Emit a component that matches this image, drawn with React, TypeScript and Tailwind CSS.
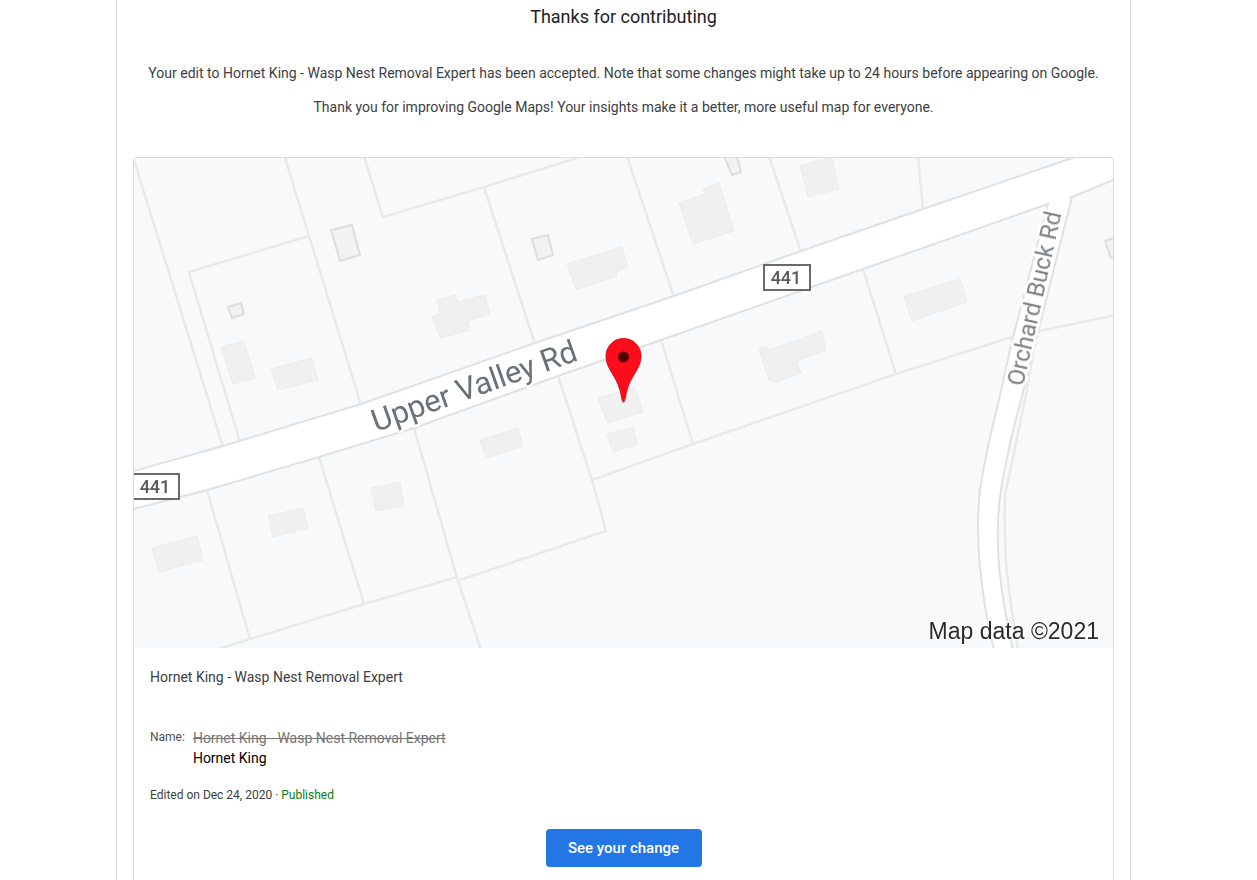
const PLACE_NAME = "Hornet King - Wasp Nest Removal Expert"

// Property boundaries
const LOT_LINES = [
  "M134 160 L223 447",
  "M285 158 L309 236 L361 405",
  "M309 236 L189 272 L240 442",
  "M364 156 L383 217 L484 187 L577 158",
  "M484 187 L535 344",
  "M627 156 L674 297",
  "M769 156 L801 252",
  "M918 156 L923 210",
  "M207 490 L250 639",
  "M319 457 L364 604",
  "M414 428 L457 578 L481 650",
  "M216 650 L250 639 L364 604 L457 577",
  "M558 376 L592 480 L606 531 L460 580",
  "M592 480 L693 444 L896 374 L1012 337 L1116 315",
  "M661 340 L693 444",
  "M863 269 L896 374",
]

const BUILDINGS = [
  "221,347 244,341 255,378 233,384",
  "271,369 312,358 318,380 278,390",
  "437,300 455,295 458,302 485,295 490,314 468,321 470,330 440,338 432,317 440,314",
  "567,264 622,247 628,267 616,272 617,276 576,290",
  "679,203 705,194 703,189 719,183 734,231 693,244",
  "800,166 832,157 839,189 808,197",
  "904,296 960,279 967,302 912,321",
  "759,349 766,346 769,350 822,331 826,350 797,361 801,373 776,382 769,380",
  "480,440 518,428 523,446 486,458",
  "598,398 635,387 643,412 607,423",
  "607,434 633,427 638,444 613,452",
  "152,548 197,536 203,560 159,572",
  "268,516 303,508 308,528 273,537",
  "371,488 400,482 404,506 376,511",
]

const SHEDS = [
  "331,230 352,225 360,255 340,261",
  "228,307 241,303 244,314 232,318",
  "532,239 548,235 553,255 538,260",
  "724,156 736,153 741,172 732,175",
  "1105,241 1120,236 1126,254 1111,258",
]

function RouteShield({ x, y }: { x: number; y: number }) {
  return (
    <g>
      <rect x={x} y={y} width="46" height="25" fill="#fff" stroke="#6a6a6a" strokeWidth="2" />
      <text x={x + 22} y={y + 19} textAnchor="middle" fontSize="18" fontWeight="500" fill="#56585a">
        441
      </text>
    </g>
  )
}

function StaticMap() {
  return (
    <svg
      viewBox="134 158 979 490"
      className="block w-full rounded-t-[3px] font-['Roboto',sans-serif]"
      role="img"
      aria-label="Map of Upper Valley Rd"
    >
      <defs>
        <filter id="soften">
          <feGaussianBlur stdDeviation="0.7" />
        </filter>
      </defs>
      <rect x="134" y="158" width="979" height="490" fill="#f8f9fb" />

      <g filter="url(#soften)">
        <g fill="none" stroke="#e8e9e9" strokeWidth="2.5">
          {LOT_LINES.map((d) => (
            <path key={d} d={d} />
          ))}
        </g>
        <g fill="#f0f0f0" stroke="#ebebeb" strokeWidth="1">
          {BUILDINGS.map((points) => (
            <polygon key={points} points={points} />
          ))}
        </g>
        <g fill="#f1f3f3" stroke="#dcdede" strokeWidth="2">
          {SHEDS.map((points) => (
            <polygon key={points} points={points} />
          ))}
        </g>

        {/* Roads */}
        <path
          d="M1036 337 L1025 400 L1005 495 Q1004 528 1006 562 Q1009 595 1018 650"
          fill="none"
          stroke="#e8eaea"
          strokeWidth="2.5"
        />
        <path
          d="M1048 204 L1012 341 L999 400 Q985 455 980 490 Q976 525 980 567 Q984 610 994 650 L1013 650 Q1003 605 999 567 Q996 525 1000 497 Q1006 455 1021 400 L1072 197 Z"
          fill="#fff"
          stroke="#dfe1e3"
          strokeWidth="2"
        />
        <path
          d="M130 472 L223 446 L361 404 L535 343 L674 296 L801 251 L923 209 L1078 156 L1116 156 L1116 179 L1072 197 L1048 204 L863 269 L661 340 L558 376 L414 428 L319 457 L207 490 L130 510 Z"
          fill="#fff"
          stroke="#dfe1e3"
          strokeWidth="2"
        />
        <path d="M1050 200 L1070 194 L1067 208 L1048 211 Z" fill="#fff" />
      </g>

      {/* Labels */}
      <g filter="url(#soften)">
        <text
          transform="translate(376 432) rotate(-19.5)"
          fontSize="31"
          fill="#697277"
          stroke="#fff"
          strokeWidth="5"
          strokeLinejoin="round"
          paintOrder="stroke"
        >
          Upper Valley Rd
        </text>
        <text
          transform="translate(1023 387) rotate(-77.5)"
          fontSize="24"
          fill="#7d8184"
          stroke="#fff"
          strokeWidth="6"
          strokeLinejoin="round"
          paintOrder="stroke"
        >
          Orchard Buck Rd
        </text>
        <RouteShield x={764} y={265} />
        <RouteShield x={133} y={474} />
        <text
          x="1099"
          y="639"
          textAnchor="end"
          fontSize="23"
          fill="#2a2a2a"
          stroke="#fff"
          strokeOpacity="0.6"
          strokeWidth="3"
          paintOrder="stroke"
          className="font-['Liberation_Sans',sans-serif]"
        >
          Map data ©2021
        </text>
      </g>

      {/* Pin */}
      <path
        d="M623.5 402 C622 402 621.5 396 620 390 C616 375 606 369 606 356 A17.5 17.5 0 0 1 641 356 C641 369 631 375 627 390 C625.5 396 625 402 623.5 402 Z"
        fill="#fc0d1b"
        stroke="#d80b18"
        strokeWidth="1"
        filter="url(#soften)"
      />
      <circle cx="623.5" cy="357" r="5.5" fill="#560406" filter="url(#soften)" />
    </svg>
  )
}

export default function App() {
  return (
    <div className="min-h-screen bg-white pl-[116px] pr-[126px] font-['Roboto',sans-serif] text-sm text-[#3c4043]">
      <main className="min-h-screen border-x border-[#dadce0] px-4">
        {/* Intro */}
        <header className="pb-10 text-center">
          <h1 className="pt-[5px] text-lg leading-6 text-[#202124]">Thanks for contributing</h1>
          <p className="mt-[34px] leading-5">
            Your edit to {PLACE_NAME} has been accepted. Note that some changes might take up to 24 hours before
            appearing on Google.
          </p>
          <p className="mt-[14px] leading-5">
            Thank you for improving Google Maps! Your insights make it a better, more useful map for everyone.
          </p>
        </header>

        {/* Edit card */}
        <section className="min-h-[723px] rounded-t border border-b-0 border-[#dadce0]">
          <StaticMap />
          <div className="px-4 pt-[19px]">
            <h2 className="leading-5">{PLACE_NAME}</h2>
            <dl className="mt-[41px] flex gap-2">
              <dt className="text-xs leading-[18px] text-[#4d5156]">Name:</dt>
              <dd className="leading-5">
                <del className="block text-[#757575]">{PLACE_NAME}</del>
                <ins className="block text-black no-underline">Hornet King</ins>
              </dd>
            </dl>
            <p className="mt-[18px] text-xs leading-[18px]">
              Edited on Dec 24, 2020 · <span className="text-[#0b8014]">Published</span>
            </p>
            <div className="mt-[25px] flex justify-center">
              <button
                type="button"
                className="min-w-[156px] rounded bg-[#2376e5] px-4 py-[9px] text-[15px] leading-5 font-medium text-white"
              >
                See your change
              </button>
            </div>
          </div>
        </section>
      </main>
    </div>
  )
}
